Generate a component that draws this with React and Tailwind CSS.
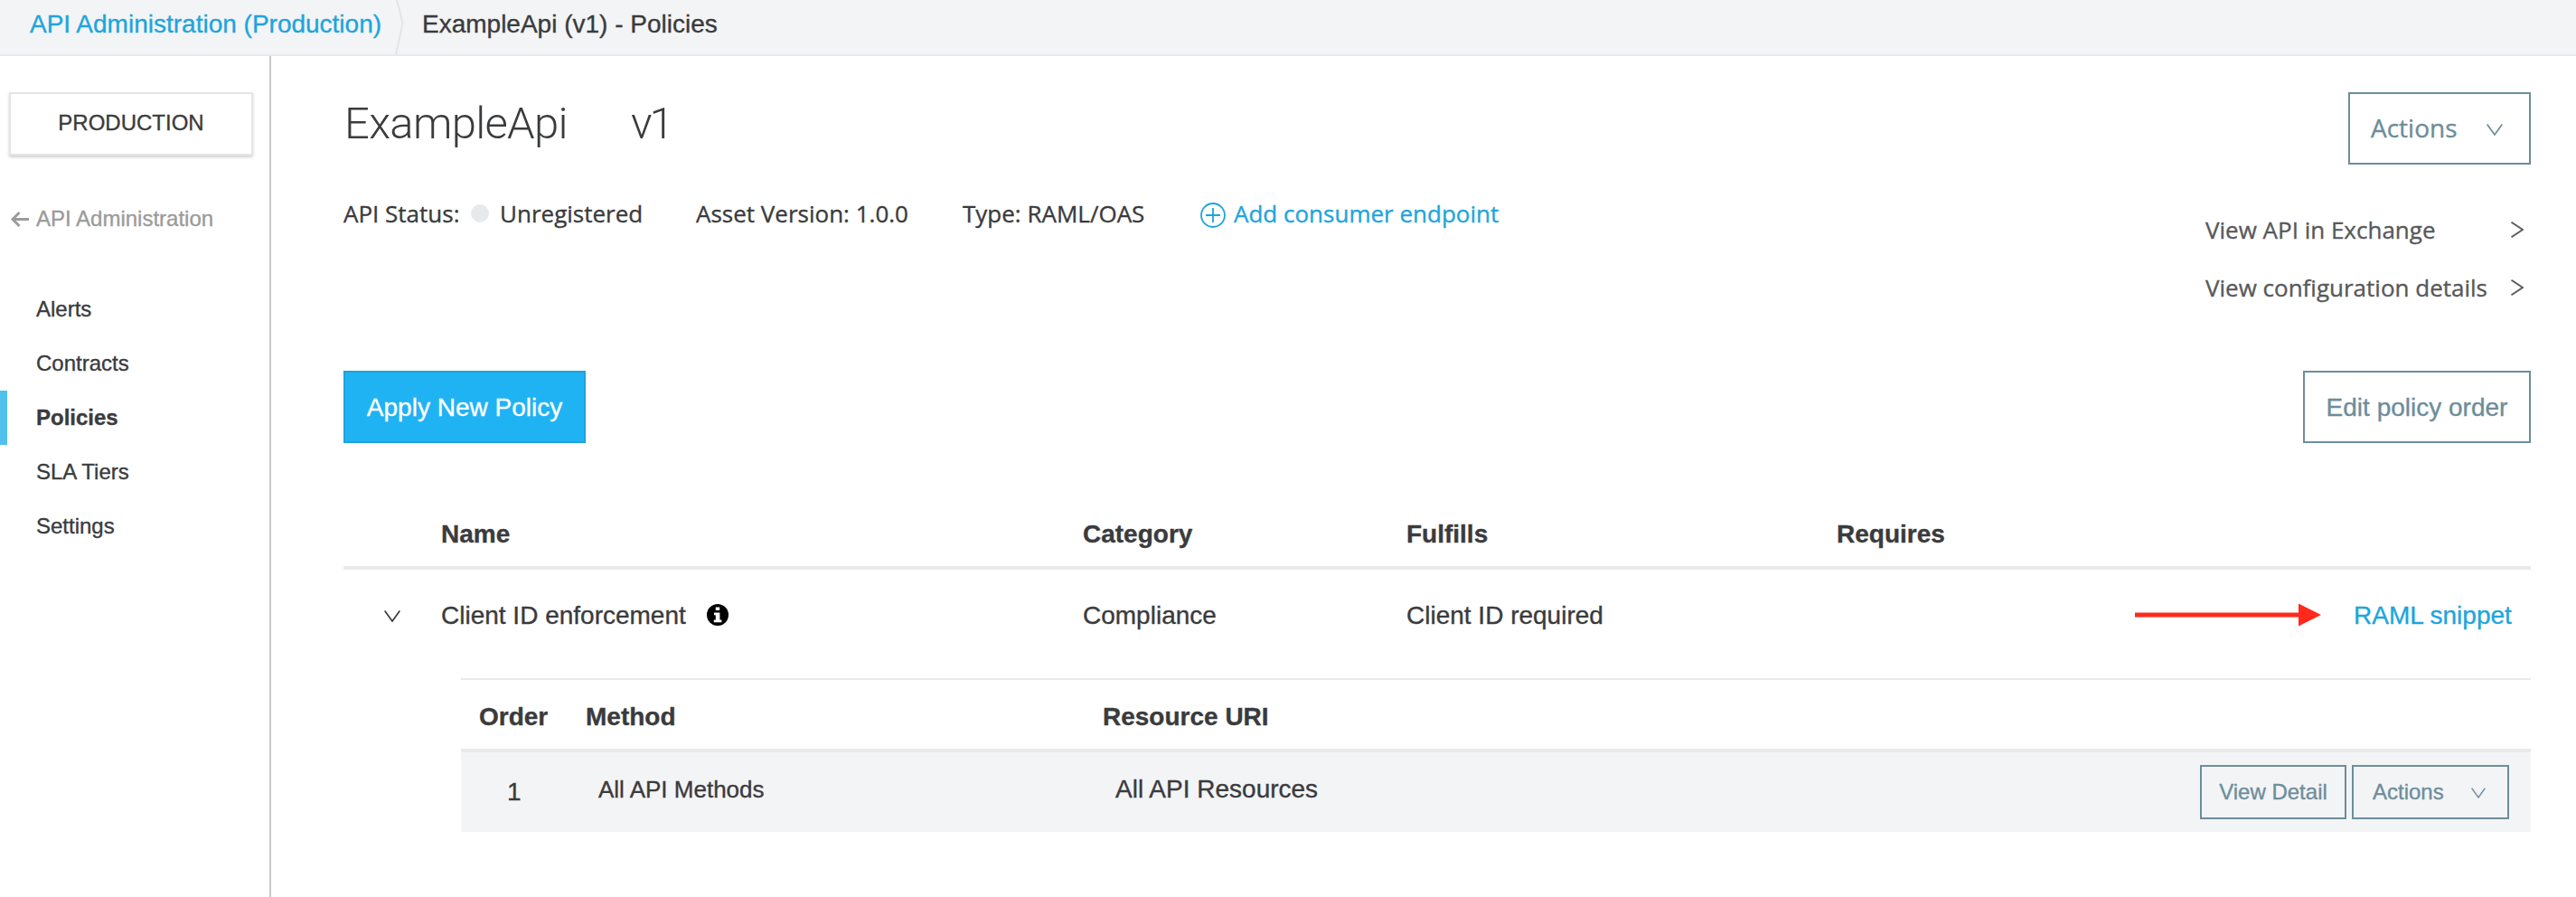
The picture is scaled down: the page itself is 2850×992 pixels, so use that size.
const navItems = ['Alerts', 'Contracts', 'Policies', 'SLA Tiers', 'Settings'];

function ChevronDown({ className }) {
  return (
    <svg viewBox="0 0 18 13" fill="none" stroke="currentColor" strokeWidth="1.7" className={className}>
      <path d="M0.7 0.5 L9 12 L17.3 0.5" />
    </svg>
  );
}

function ChevronRight() {
  return (
    <svg viewBox="0 0 14 18" fill="none" stroke="currentColor" strokeWidth="1.8" className="h-[18px] w-[14px]">
      <path d="M0.5 0.7 L13 9 L0.5 17.3" />
    </svg>
  );
}

function Breadcrumbs() {
  return (
    <header className="flex h-[62px] border-b-2 border-[#e8e9eb] bg-[#f3f4f6] text-[28px] leading-[54px]">
      <a className="ml-[33px] w-[404px] whitespace-nowrap text-[#1ea5dc]">API Administration (Production)</a>
      <svg viewBox="0 0 10 60" fill="none" stroke="#e2e4e7" strokeWidth="2" className="h-[60px] w-[10px]">
        <path d="M2 0 Q6 14 8.5 26 Q5 42 1 60" />
      </svg>
      <span className="ml-[20px] whitespace-nowrap">ExampleApi (v1) - Policies</span>
    </header>
  );
}

function Sidebar() {
  return (
    <aside className="w-[300px] shrink-0 border-r-2 border-[#c8c8c8] pt-10 text-[24px]">
      <div className="ml-[10px] flex h-[70px] w-[270px] items-center justify-center border-2 border-[#e5e5e5] pb-[3px] shadow-[0_2px_3px_rgba(0,0,0,0.18)]">
        PRODUCTION
      </div>
      <a className="mt-[40px] flex h-[60px] items-center pl-[12px] text-[#9b9b9b]">
        <svg viewBox="0 0 20 17" fill="none" stroke="currentColor" strokeWidth="3" className="mr-[8px] h-[17px] w-[20px]">
          <path d="M20 8.5 H2.5 M9.5 1 L2 8.5 L9.5 16" />
        </svg>
        API Administration
      </a>
      <nav className="mt-[40px]">
        {navItems.map((item) => (
          <a
            key={item}
            className={
              item === 'Policies'
                ? 'flex h-[60px] items-center border-l-8 border-[#4fc1ec] pl-8 font-bold'
                : 'flex h-[60px] items-center pl-10'
            }
          >
            {item}
          </a>
        ))}
      </nav>
    </aside>
  );
}

function ApiSummary() {
  return (
    <section className="flex h-[308px] justify-between font-['Open_Sans','Noto_Sans',sans-serif] text-[26px]">
      <div>
        <h1 className="mt-[5px] flex h-[60px] items-center pl-[1px] font-['Roboto',sans-serif] text-[49px] font-light tracking-[-0.7px] [-webkit-text-stroke:0px]">
          <span className="w-[317px]">ExampleApi</span>
          <span className="tracking-[-3px]">v1</span>
        </h1>
        <div className="mt-[49px] flex h-10 items-center whitespace-nowrap">
          <span className="w-[141px]">API Status:</span>
          <span className="mr-[12px] h-5 w-5 rounded-full bg-[#e8e9eb]" />
          <span className="w-[217px]">Unregistered</span>
          <span className="w-[295px]">Asset Version: 1.0.0</span>
          <span className="w-[263px]">Type: RAML/OAS</span>
          <a className="flex items-center text-[#1ea5dc]">
            <svg viewBox="0 0 28 28" fill="none" stroke="currentColor" strokeWidth="1.8" className="mr-[9px] mt-[3px] h-7 w-7">
              <circle cx="14" cy="14" r="13" />
              <path d="M14 6 V22 M6 14 H22" />
            </svg>
            Add consumer endpoint
          </a>
        </div>
      </div>
      <div className="flex w-[360px] flex-col">
        <button className="flex h-20 w-[202px] items-center justify-between self-end border-2 border-[#6d8d9b] pb-[2px] pl-[23px] pr-[29px] text-[28px] text-[#6d8d9b]">
          Actions
          <ChevronDown className="mt-[5px] h-[13px] w-[18px]" />
        </button>
        <div className="mt-10 whitespace-nowrap text-[#58595a]">
          <a className="flex h-16 items-center justify-between pr-2">
            View API in Exchange
            <ChevronRight />
          </a>
          <a className="flex h-16 items-center justify-between pr-2">
            View configuration details
            <ChevronRight />
          </a>
        </div>
      </div>
    </section>
  );
}

function PolicyTable() {
  return (
    <section className="pt-[60px]">
      <div className="flex h-20 border-b-4 border-[#e8e9eb] pl-[108px] font-bold leading-[82px]">
        <span className="w-[710px]">Name</span>
        <span className="w-[358px]">Category</span>
        <span className="w-[476px]">Fulfills</span>
        <span>Requires</span>
      </div>
      <div className="flex h-[120px] items-center pb-[18px]">
        <ChevronDown className="ml-[45px] mr-[45px] h-[13px] w-[18px]" />
        <div className="flex w-[710px] items-center">
          <span className="w-[294px] whitespace-nowrap">Client ID enforcement</span>
          <svg viewBox="0 0 24 24" className="mb-[2px] h-6 w-6">
            <circle cx="12" cy="12" r="12" fill="#000" />
            <path d="M9.8 3.4 h4.4 v3.6 h-4.4 z M8 9.4 h6.4 v8 h2 v2.8 h-8.6 v-2.8 h2 v-5.2 h-1.8 z" fill="#fff" />
          </svg>
        </div>
        <span className="w-[358px]">Compliance</span>
        <span>Client ID required</span>
        <svg viewBox="0 0 206 26" fill="#ff2a1c" className="mb-[3px] ml-auto mr-[36px] h-[26px] w-[206px]">
          <path d="M0 10.5 H181 V0.5 L206 13 L181 25.5 V15.5 H0 Z" />
        </svg>
        <a className="w-[196px] whitespace-nowrap text-[#1ea5dc]">RAML snippet</a>
      </div>
      <div className="ml-[130px] border-t-2 border-[#e8e9eb]">
        <div className="flex h-20 border-b-4 border-[#e8e9eb] pl-[20px] font-bold leading-[82px]">
          <span className="w-[118px]">Order</span>
          <span className="w-[572px]">Method</span>
          <span>Resource URI</span>
        </div>
        <div className="flex h-[88px] items-center bg-[#f3f4f6] pl-[51px] pr-[24px]">
          <span className="w-[101px]">1</span>
          <span className="mb-[6px] w-[572px] text-[26px]">All API Methods</span>
          <span className="mb-[6px]">All API Resources</span>
          <div className="ml-auto flex gap-[6px] text-[24px] text-[#6d8d9b]">
            <button className="h-[60px] w-[162px] whitespace-nowrap border-2 border-[#6d8d9b]">View Detail</button>
            <button className="flex h-[60px] w-[174px] items-center justify-between border-2 border-[#6d8d9b] pl-[21px] pr-6">
              Actions
              <ChevronDown className="mt-[2px] h-[12px] w-[16px]" />
            </button>
          </div>
        </div>
      </div>
    </section>
  );
}

export default function App() {
  return (
    <div className="flex h-[992px] w-[2850px] flex-col overflow-hidden bg-white font-['Liberation_Sans',Arial,sans-serif] text-[28px] text-[#3a3b3d] [-webkit-text-stroke:0.35px]">
      <Breadcrumbs />
      <div className="flex flex-1">
        <Sidebar />
        <main className="flex-1 pl-20 pr-[50px] pt-10">
          <ApiSummary />
          <div className="flex h-20 justify-between">
            <button className="w-[268px] whitespace-nowrap border-2 border-[#1fa3dd] bg-[#20b3f3] pt-[2px] text-white">Apply New Policy</button>
            <button className="w-[252px] whitespace-nowrap border-2 border-[#6d8d9b] pt-[2px] text-[#6d8d9b]">Edit policy order</button>
          </div>
          <PolicyTable />
        </main>
      </div>
    </div>
  );
}
